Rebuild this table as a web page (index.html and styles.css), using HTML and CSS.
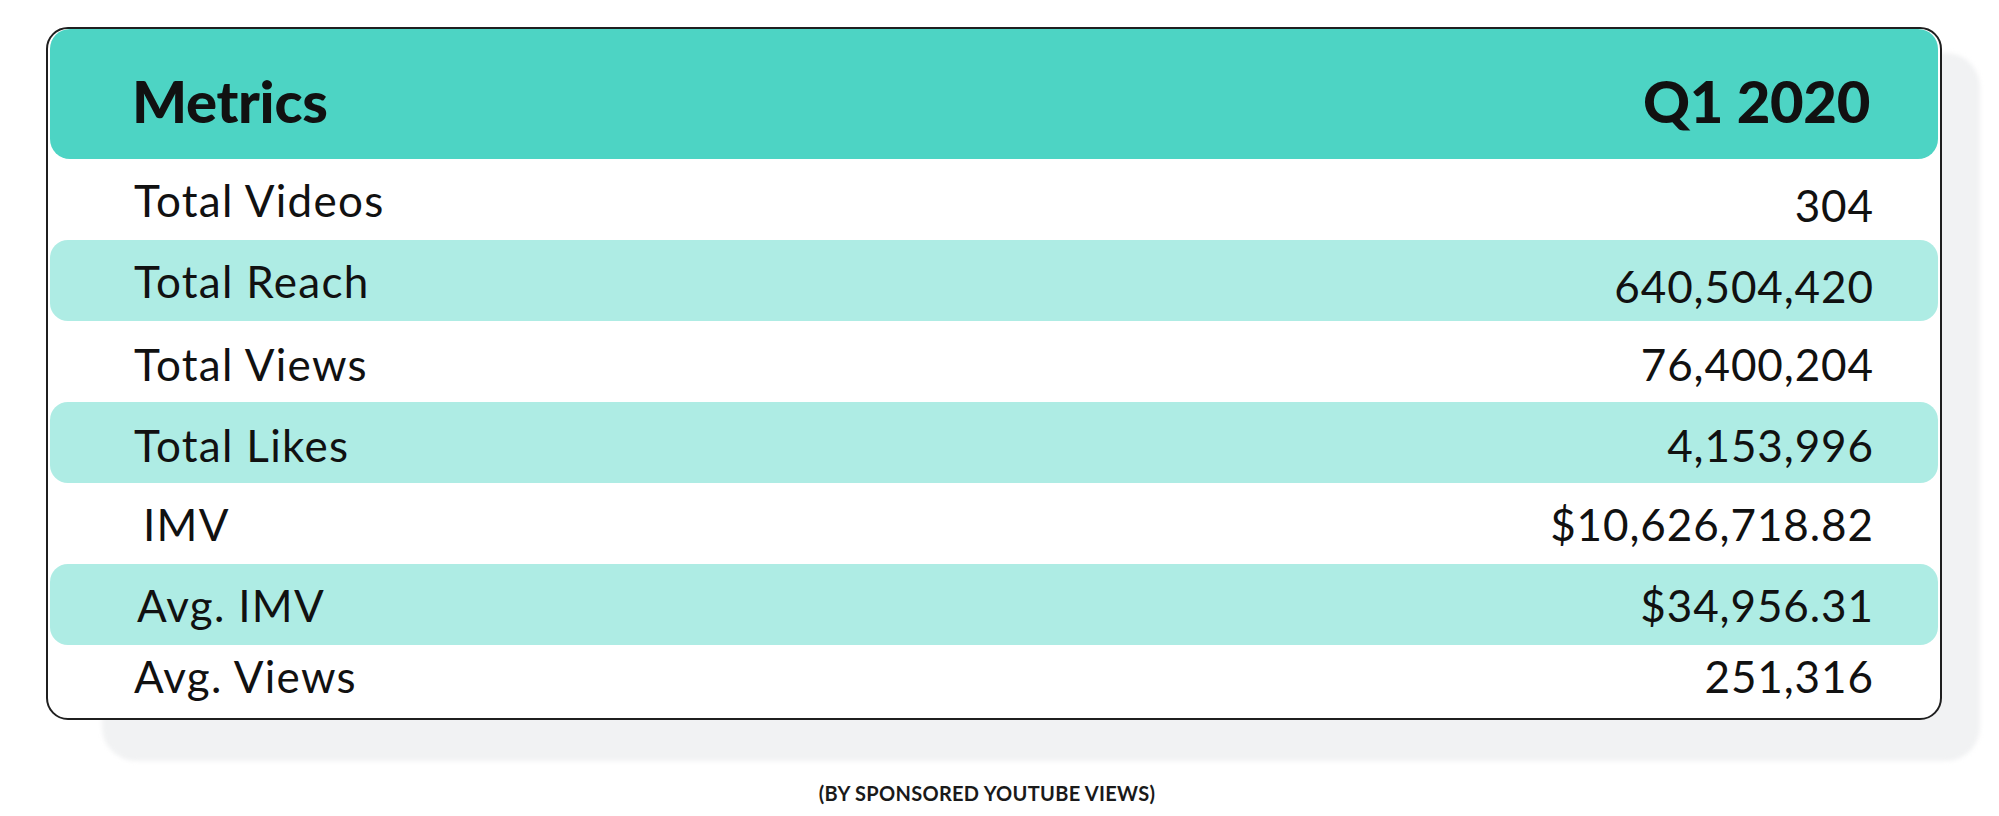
FILE: index.html
```html
<!DOCTYPE html>
<html lang="en">
<head>
<meta charset="utf-8">
<title>Metrics Q1 2020</title>
<link rel="stylesheet" href="styles.css">
</head>
<body>
<main class="page">
  <section class="card">
    <div class="head">
      <span class="head-label">Metrics</span>
      <span class="head-value">Q1 2020</span>
    </div>
    <div class="row row-low">
      <span class="label">Total Videos</span>
      <span class="value">304</span>
    </div>
    <div class="row alt row-low">
      <span class="label">Total Reach</span>
      <span class="value">640,504,420</span>
    </div>
    <div class="row row-down">
      <span class="label">Total Views</span>
      <span class="value">76,400,204</span>
    </div>
    <div class="row alt row-down">
      <span class="label">Total Likes</span>
      <span class="value">4,153,996</span>
    </div>
    <div class="row">
      <span class="label indent">IMV</span>
      <span class="value">$10,626,718.82</span>
    </div>
    <div class="row alt">
      <span class="label indent-s">Avg. IMV</span>
      <span class="value">$34,956.31</span>
    </div>
    <div class="row last">
      <span class="label">Avg. Views</span>
      <span class="value">251,316</span>
    </div>
  </section>
  <p class="note">(BY SPONSORED YOUTUBE VIEWS)</p>
</main>
</body>
</html>
```

FILE: styles.css
```css
html {
  background: #ffffff;
}

body {
  margin: 0;
  font-family: Lato, "Noto Sans", "Liberation Sans", sans-serif;
  color: #111111;
}

.page {
  position: relative;
  z-index: 0;
  width: 1999px;
  padding-top: 27px;
  box-sizing: border-box;
}

.card {
  position: relative;
  margin-left: 46px;
  width: 1896px;
  box-sizing: border-box;
  border: 2px solid #1f1f1f;
  border-radius: 22px;
  background: #ffffff;
  padding: 0 2px;
}

.card::before {
  content: "";
  position: absolute;
  left: 54px;
  right: -40px;
  top: 24px;
  bottom: -43px;
  background: #f1f2f3;
  border-radius: 34px;
  z-index: -1;
  filter: blur(2px);
}

.head {
  height: 130px;
  background: #4dd4c4;
  border-radius: 20px;
  display: flex;
  justify-content: space-between;
  align-items: center;
  padding: 12px 68px 0 82px;
  box-sizing: border-box;
  font-weight: 900;
  font-size: 58px;
  letter-spacing: -0.3px;
}

.row {
  height: 81px;
  display: flex;
  justify-content: space-between;
  align-items: center;
  padding: 0 65px 0 84px;
  box-sizing: border-box;
  border-radius: 18px;
  font-size: 44px;
  line-height: 1;
}

.label {
  letter-spacing: 1.3px;
}

.value {
  letter-spacing: 0.9px;
  margin-right: -0.9px;
}

.row.alt {
  background: #aeece4;
}

.row.last {
  height: 73px;
  padding-bottom: 12px;
}

.row-low .value {
  padding-top: 10px;
}

.row-down {
  padding-top: 5px;
}

.indent {
  padding-left: 9px;
}

.indent-s {
  padding-left: 3px;
}

.note {
  margin: 61px 0 0;
  text-align: center;
  font-size: 20px;
  font-weight: 700;
  letter-spacing: 0.3px;
  color: #1a1a1a;
  padding-right: 25px;
}
```
